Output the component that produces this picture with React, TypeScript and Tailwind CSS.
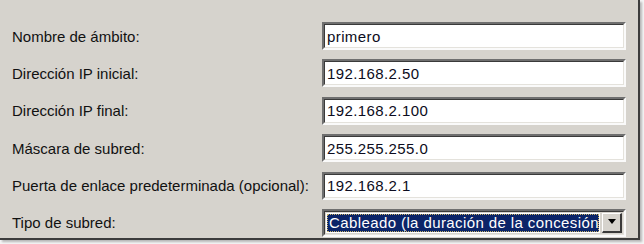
const fields = [
  { label: "Nombre de ámbito:", value: "primero" },
  { label: "Dirección IP inicial:", value: "192.168.2.50" },
  { label: "Dirección IP final:", value: "192.168.2.100" },
  { label: "Máscara de subred:", value: "255.255.255.0" },
  { label: "Puerta de enlace predeterminada (opcional):", value: "192.168.2.1" },
];

const font = { fontFamily: '"Liberation Sans", Arial, sans-serif' };

const Sunken = ({ children }: { children: React.ReactNode }) => (
  <div className="h-[28px] w-[304px] shrink-0 border-t-2 border-l-2 border-t-[#6f6f6f] border-l-[#6f6f6f] border-b-2 border-r-2 border-b-[#fafafa] border-r-[#fafafa]">
    <div className="h-full w-full border-t border-l border-t-[#3a3a3a] border-l-[#3a3a3a] border-b border-r border-b-[#e4e2dc] border-r-[#e4e2dc] bg-white flex items-center overflow-hidden">
      {children}
    </div>
  </div>
);

export default function App() {
  return (
    <div className="w-[644px] h-[244px] bg-[#f4f4f4]" style={font}>
      <div className="w-[640px] h-[240px] bg-[#d6d3cd] border-r-2 border-b-2 border-[#3c3c3c] shadow-[2px_2px_2px_rgba(0,0,0,0.25)]">
        <div className="flex flex-col gap-[9.4px] pt-[22px]">
          {fields.map((f) => (
            <div key={f.label} className="flex items-center h-[28px]">
              <span className="w-[322px] shrink-0 pl-[12px] text-[15px] text-[#111] leading-none">{f.label}</span>
              <Sunken>
                <span className="pl-[2px] text-[15px] text-[#0c0c20] leading-none tracking-[0.4px]">{f.value}</span>
              </Sunken>
            </div>
          ))}
          <div className="flex items-center h-[28px]">
            <span className="w-[322px] shrink-0 pl-[12px] text-[15px] text-[#111] leading-none">Tipo de subred:</span>
            <Sunken>
              <div className="flex items-center h-full w-full bg-[#d6d3cd] p-[1px]">
                <div className="flex-1 min-w-0 h-full bg-white p-[1px]">
                  <div className="h-full border border-dotted border-[#c8b26a] bg-[#0b2468] flex items-center overflow-hidden">
                    <span className="pl-[1px] text-[15px] text-white leading-none whitespace-nowrap tracking-[0.4px]">
                      Cableado (la duración de la concesión será de 8 días)
                    </span>
                  </div>
                </div>
                <div className="w-[20px] shrink-0 h-full ml-[2px] bg-[#d6d3cd] border-t border-l border-t-white border-l-white border-b-2 border-r-2 border-b-[#3a3a3a] border-r-[#3a3a3a] flex items-center justify-center">
                  <svg width="10" height="6" viewBox="0 0 10 6">
                    <polygon points="1,0 9,0 5,5" fill="#000" />
                  </svg>
                </div>
              </div>
            </Sunken>
          </div>
        </div>
      </div>
    </div>
  );
}
